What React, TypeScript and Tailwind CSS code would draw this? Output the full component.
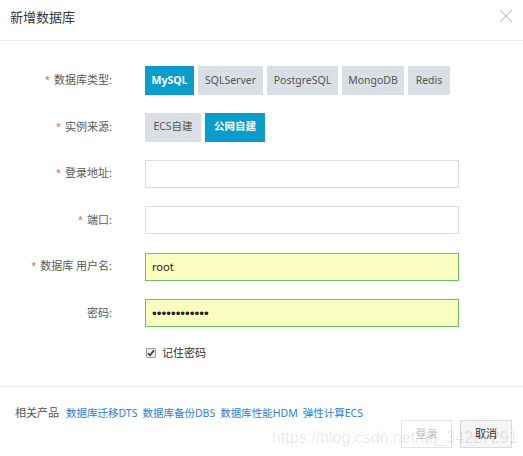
import { useState } from "react";

const dbTypes = [
  { name: "MySQL", w: "w-[49px]" },
  { name: "SQLServer", w: "w-[65px]" },
  { name: "PostgreSQL", w: "w-[71px]" },
  { name: "MongoDB", w: "w-[62px]" },
  { name: "Redis", w: "w-[42px]" },
];

const sources = [
  { name: "ECS自建", w: "w-[56px]" },
  { name: "公网自建", w: "w-[60px]" },
];

const links = ["数据库迁移DTS", "数据库备份DBS", "数据库性能HDM", "弹性计算ECS"];

const Label = ({ text, required = true }: { text: string; required?: boolean }) => (
  <div className="w-[113px] shrink-0 text-right text-[11px] text-[#5a5a5a] pr-[1px]">
    {required && <span className="text-[#f25656] text-[9px] mr-[4px] align-[1px]">*</span>}
    {text}:
  </div>
);

const Toggle = ({
  label,
  width,
  active,
  onClick,
}: {
  label: string;
  width: string;
  active: boolean;
  onClick: () => void;
}) => (
  <button
    onClick={onClick}
    className={`${width} h-[29px] text-[10.5px] flex items-center justify-center ${
      active ? "bg-[#0a9dcc] text-white font-bold" : "bg-[#dadfe5] text-[#555]"
    }`}
  >
    {label}
  </button>
);

export default function App() {
  const [dbType, setDbType] = useState("MySQL");
  const [source, setSource] = useState("公网自建");
  const [remember, setRemember] = useState(true);

  return (
    <div
      className="relative w-[523px] h-[456px] bg-white overflow-hidden"
      style={{ fontFamily: '"Noto Sans", "Noto Sans CJK SC", sans-serif' }}
    >
      {/* Header */}
      <div className="h-[41px] border-b border-[#ebebeb] flex items-center justify-between pl-[10px] pr-[10px]">
        <span className="text-[13px] text-[#333] -mt-[4px]">新增数据库</span>
        <svg width="14" height="14" viewBox="0 0 14 14" className="-mt-[9px]">
          <path d="M1 1L13 13M13 1L1 13" stroke="#c4c4c4" strokeWidth="1.1" />
        </svg>
      </div>

      {/* Form */}
      <div className="h-[345px] pt-[25px] flex flex-col gap-[17.5px]">
        <div className="h-[29px] flex items-center gap-[32px]">
          <Label text="数据库类型" />
          <div className="flex gap-[4px]">
            {dbTypes.map((t) => (
              <Toggle
                key={t.name}
                label={t.name}
                width={t.w}
                active={dbType === t.name}
                onClick={() => setDbType(t.name)}
              />
            ))}
          </div>
        </div>

        <div className="h-[29px] flex items-center gap-[32px]">
          <Label text="实例来源" />
          <div className="flex gap-[4px]">
            {sources.map((s) => (
              <Toggle
                key={s.name}
                label={s.name}
                width={s.w}
                active={source === s.name}
                onClick={() => setSource(s.name)}
              />
            ))}
          </div>
        </div>

        <div className="h-[29px] flex items-center gap-[32px]">
          <Label text="登录地址" />
          <input className="w-[314px] h-[28px] border border-[#dcdcdc] outline-none px-[6px] text-[11px]" />
        </div>

        <div className="h-[29px] flex items-center gap-[32px]">
          <Label text="端口" />
          <input className="w-[314px] h-[28px] border border-[#dcdcdc] outline-none px-[6px] text-[11px]" />
        </div>

        <div className="h-[29px] flex items-center gap-[32px]">
          <Label text="数据库 用户名" />
          <input
            defaultValue="root"
            className="w-[314px] h-[28px] border border-[#6cc35e] bg-[#fafdc0] outline-none px-[6px] text-[11px] text-[#222]"
          />
        </div>

        <div className="h-[29px] flex items-center gap-[32px]">
          <Label text="密码" required={false} />
          <input
            type="password"
            defaultValue="123456789012"
            className="w-[314px] h-[28px] border border-[#6cc35e] bg-[#fafdc0] outline-none px-[6px] text-[13.5px] text-[#222] font-['Liberation_Sans',sans-serif]"
          />
        </div>

        <div className="h-[20px] -mt-[2px] flex items-center pl-[146px]">
          <button
            onClick={() => setRemember(!remember)}
            className="w-[10px] h-[10px] border border-[#9a9a9a] bg-[#ececec] rounded-[1px] flex items-center justify-center"
          >
            {remember && (
              <svg width="8" height="8" viewBox="0 0 8 8">
                <path d="M1 4.2L3 6.3L7 1.3" stroke="#333" strokeWidth="1.6" fill="none" />
              </svg>
            )}
          </button>
          <span className="ml-[6px] text-[11px] text-[#333]">记住密码</span>
        </div>
      </div>

      {/* Footer */}
      <div className="border-t border-[#ebebeb] pt-[19px]">
        <div className="h-[14px] leading-[14px] flex items-center pl-[15px] text-[10.5px]">
          <span className="text-[#555] mr-[7px] text-[11px]">相关产品</span>
          <div className="flex gap-[5px]">
            {links.map((l) => (
              <a key={l} className="text-[#2b7fd8] cursor-pointer">
                {l}
              </a>
            ))}
          </div>
        </div>
        <div className="flex justify-end gap-[8px] pr-[11px]">
          <button className="w-[51px] h-[28px] border border-[#e3e3e3] bg-white text-[11px] text-[#c8c8c8]">
            登录
          </button>
          <button className="w-[52px] h-[28px] border border-[#dcdcdc] bg-[#f5f5f5] text-[11px] text-[#333]">
            取消
          </button>
        </div>
      </div>

      {/* Watermark */}
      <div
        className="absolute left-[272px] top-[428px] text-[16px] leading-[20px] text-black/10 pointer-events-none whitespace-nowrap"
        style={{ fontFamily: '"Liberation Sans", sans-serif' }}
      >
        https://blog.csdn.net/qq_34227291
      </div>
    </div>
  );
}
